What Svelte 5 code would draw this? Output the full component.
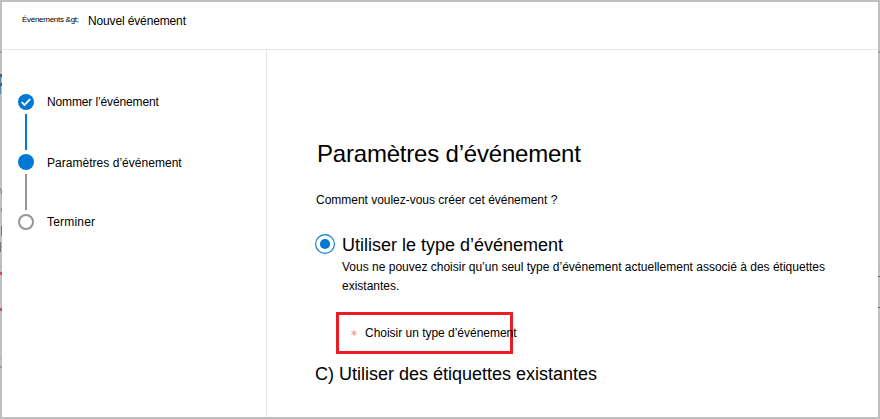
<script>
  const steps = [
    { label: 'Nommer l’événement', state: 'done', spacing: -0.13 },
    { label: 'Paramètres d’événement', state: 'current', spacing: 0.03 },
    { label: 'Terminer', state: 'todo', spacing: 0.2 }
  ];
  // Slivers of the dimmed page that stay visible around the panel.
  const slivers = [
    { x: 0, y: 51, w: 2, h: 2, c: '#a3a3a3' },
    { x: 0, y: 74, w: 2, h: 3, c: '#555b60' },
    { x: 0, y: 77, w: 1, h: 6, c: '#5687b5' },
    { x: 0, y: 83, w: 2, h: 3, c: '#555b60' },
    { x: 0, y: 86, w: 1, h: 8, c: '#5687b5' },
    { x: 0, y: 188, w: 1, h: 3, c: '#999' },
    { x: 1, y: 190, w: 1, h: 4, c: '#888' },
    { x: 1, y: 208, w: 1, h: 4, c: '#888' },
    { x: 1, y: 226, w: 1, h: 10, c: '#777' },
    { x: 0, y: 242, w: 1, h: 10, c: '#777' },
    { x: 1, y: 246, w: 1, h: 1, c: '#888' },
    { x: 0, y: 266, w: 2, h: 1, c: '#aaa' },
    { x: 0, y: 272, w: 2, h: 3, c: '#c44e53' },
    { x: 0, y: 308, w: 2, h: 3, c: '#c44e53' },
    { x: 0, y: 358, w: 2, h: 1, c: '#aaa' },
    { x: 0, y: 366, w: 2, h: 2, c: '#a0a0a0' },
    { x: 878, y: 51, w: 2, h: 2, c: '#a3a3a3' },
    { x: 878, y: 266, w: 2, h: 1, c: '#b0b0b0' },
    { x: 878, y: 276, w: 2, h: 1, c: '#666' },
    { x: 878, y: 307, w: 2, h: 1, c: '#666' }
  ];
</script>

<div class="backdrop">
  <svg class="slivers" width="880" height="419" aria-hidden="true" shape-rendering="crispEdges">
    {#each slivers as s}
      <rect x={s.x} y={s.y} width={s.w} height={s.h} fill={s.c} />
    {/each}
  </svg>
  <div class="panel">
    <header>
      <span class="crumb">Événements &amp;gt;</span>
      <span class="here">Nouvel événement</span>
    </header>
    <div class="body">
      <nav>
        {#each steps as step, i}
          <div class="step" class:current={step.state === 'current'}>
            <svg width="16" height="16" viewBox="0 0 16 16">
              {#if step.state === 'todo'}
                <circle cx="8" cy="8" r="7" fill="#fff" stroke="#979593" stroke-width="2" />
              {:else}
                <circle cx="8" cy="8" r="8" fill="#0078d4" />
              {/if}
              {#if step.state === 'done'}
                <path d="M3.6 8.2 L6.5 11 L12.2 5.2" fill="none" stroke="#fff" stroke-width="1.8" />
              {/if}
            </svg>
            <span style="letter-spacing: {step.spacing}px">{step.label}</span>
          </div>
          {#if i < 2}
            <div class="link" class:pending={i === 1}></div>
          {/if}
        {/each}
      </nav>
      <main>
        <h1>Paramètres d’événement</h1>
        <p class="question">Comment voulez-vous créer cet événement ?</p>
        <div class="choice">
          <svg width="20" height="20" viewBox="0 0 20 20">
            <circle cx="10" cy="10" r="9.4" fill="#fff" stroke="#0078d4" stroke-width="1.1" />
            <circle cx="10" cy="10" r="5.1" fill="#0078d4" />
          </svg>
          <div>
            <h2>Utiliser le type d’événement</h2>
            <p class="hint">Vous ne pouvez choisir qu’un seul type d’événement actuellement associé à des étiquettes<br />existantes.</p>
          </div>
        </div>
        <div class="picker">
          <svg width="6" height="6" viewBox="0 0 6 6">
            <path d="M3 0V6M0.3 1.4L5.7 4.6M5.7 1.4L0.3 4.6" stroke="#f08080" stroke-width="0.8" />
          </svg>
          <span>Choisir un type d’événement</span>
        </div>
        <h2 class="existing">C) Utiliser des étiquettes existantes</h2>
      </main>
    </div>
  </div>
</div>

<style>
  .backdrop {
    position: relative;
    box-sizing: border-box;
    width: 880px;
    height: 419px;
    padding: 2px;
    background: #bfbfbf;
    color: #000;
    font: 12px/16px "Liberation Sans", Arial, sans-serif;
  }
  .slivers { position: absolute; left: 0; top: 0; }
  .panel {
    position: relative;
    display: flex;
    flex-direction: column;
    height: 415px;
    background: #fff;
    white-space: nowrap;
  }
  header {
    display: flex;
    height: 47px;
    padding-left: 20px;
    border-bottom: 1px solid #e5e5e5;
  }
  .crumb { width: 66px; padding-top: 10px; font-size: 8px; letter-spacing: -0.28px; }
  .here { padding-top: 11px; letter-spacing: -0.14px; }
  .body { display: flex; flex: 1; }
  nav {
    box-sizing: border-box;
    width: 265px;
    padding: 44px 0 0 16px;
    border-right: 1px solid #e8e8e8;
  }
  .step { display: flex; gap: 13px; height: 16px; }
  .step.current span { padding-top: 1px; }
  .link { width: 2px; height: 36px; margin: 4px 0 4px 7px; background: #0078d4; }
  .link.pending { background: #979593; }
  main { padding: 90px 0 0 48px; }
  h1, h2, p { margin: 0; font-weight: 400; }
  h1 { padding-left: 2px; font-size: 24px; line-height: 28px; letter-spacing: -0.2px; }
  .question { margin: 24px 0 0 1px; letter-spacing: -0.02px; }
  .choice { display: flex; gap: 7px; margin-top: 26px; }
  h2 { font-size: 18px; line-height: 22px; }
  .hint { margin-top: 2px; line-height: 19px; }
  .picker {
    display: flex;
    align-items: center;
    box-sizing: border-box;
    width: 177px;
    height: 42px;
    margin: 16px 0 0 21px;
    padding-left: 12px;
    gap: 8px;
    border: 3px solid #ed1c24;
    letter-spacing: -0.02px;
  }
  .picker svg { flex: none; }
  .existing { margin-top: 9px; }
</style>
